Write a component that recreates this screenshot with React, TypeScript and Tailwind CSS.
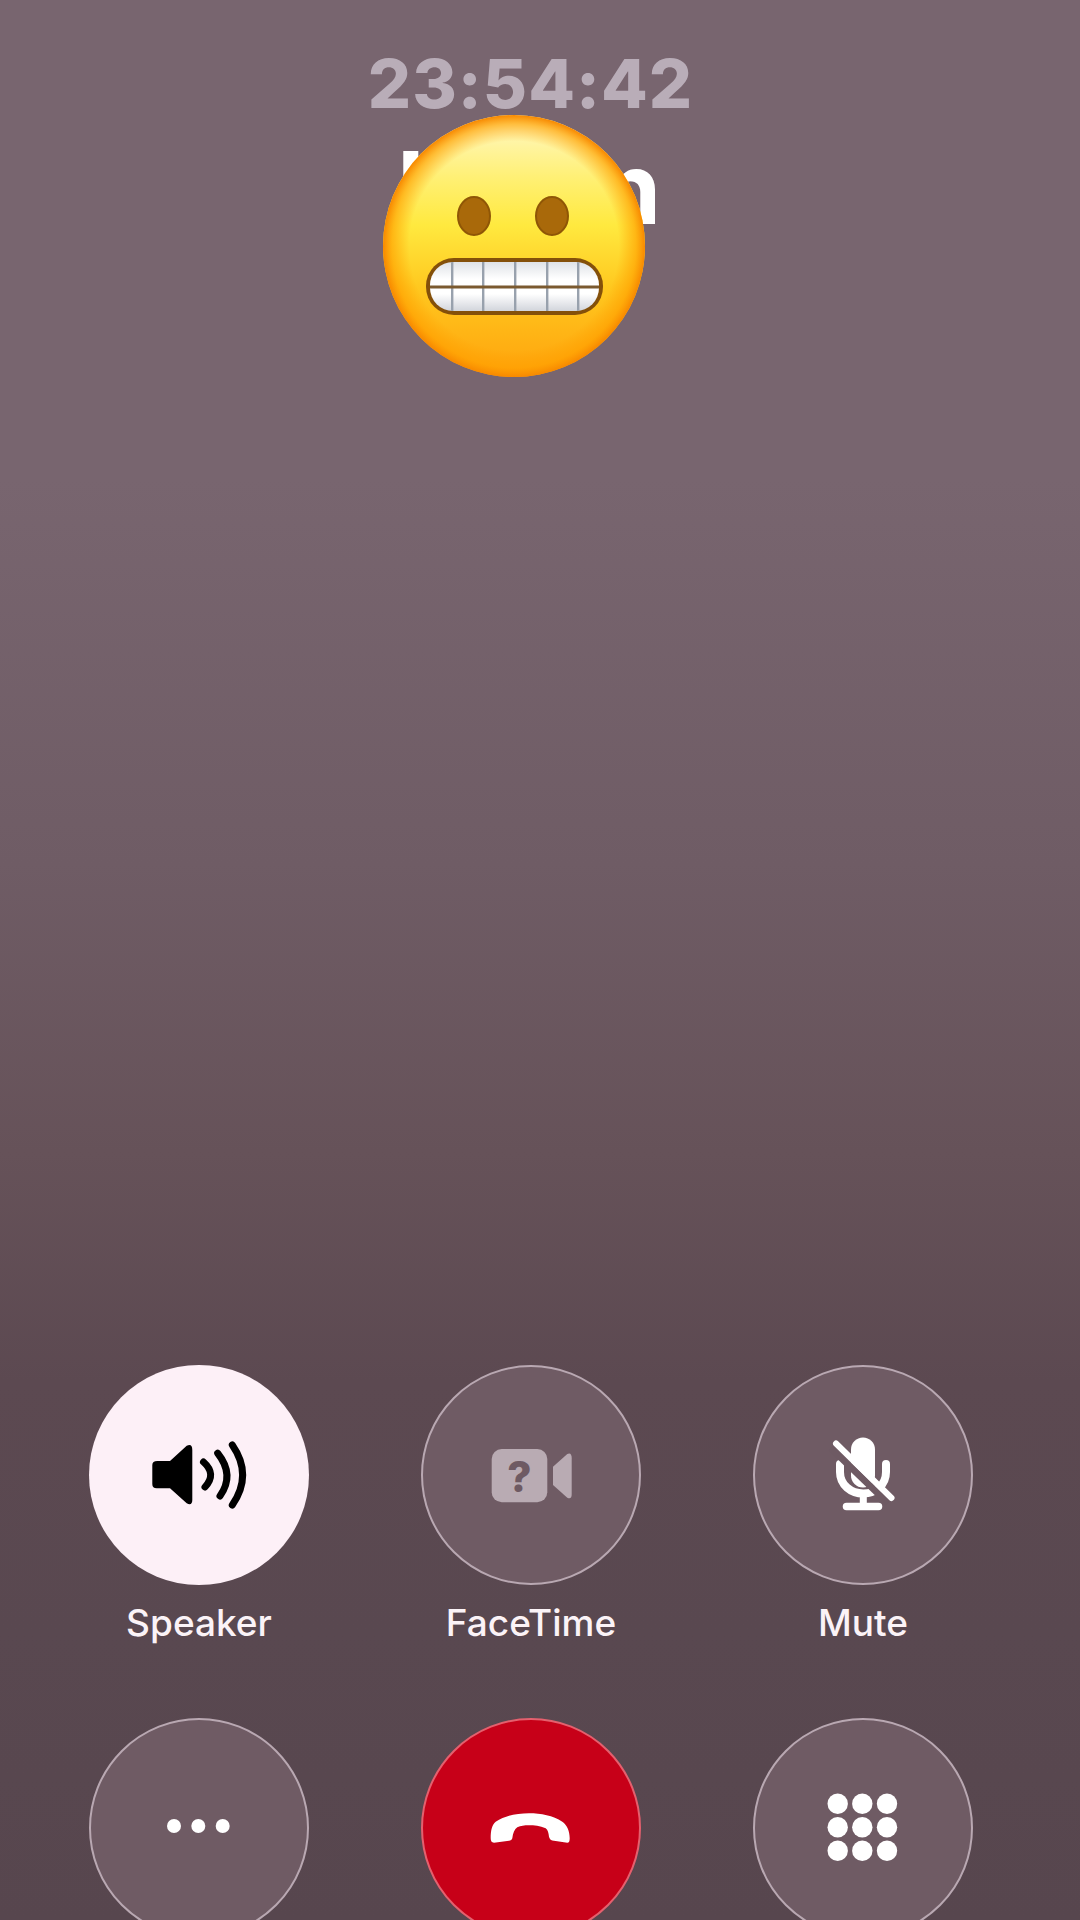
import React from "react";

const fill = "#ffffff";

function SpeakerIcon() {
  return (
    <svg width="220" height="220" viewBox="0 0 220 220" className="shrink-0">
      <path d="M68.3 96H81L97.7 80.7Q103.3 78 103.3 85V135Q103.3 141 97.7 138.3L81 123.3H67.7Q63.3 123.3 63.3 119V100Q63.3 96 68.3 96Z" fill="#000" />
      <g fill="none" stroke="#000" strokeWidth="7" strokeLinecap="round">
        <path d="M114.5 97Q128 109 116 122" />
        <path d="M128.7 88.3Q146 110 131 131" />
        <path d="M143.3 80Q164 110 143.3 140" />
      </g>
    </svg>
  );
}

function FaceTimeIcon() {
  return (
    <svg width="220" height="220" viewBox="0 0 220 220" className="shrink-0">
      <rect x="70.7" y="84" width="55.6" height="53.3" rx="10" fill="#b9abb3" />
      <path d="M132 101.7L146.3 89Q150.7 87 150.7 93.3V129Q150.7 135 146.3 132.7L132 120Z" fill="#b9abb3" />
      <text x="98.5" y="126.5" textAnchor="middle" fontFamily="Inter, sans-serif" fontWeight="800" fontSize="42" fill="#6e5a63">?</text>
    </svg>
  );
}

function MuteIcon() {
  return (
    <svg width="220" height="220" viewBox="0 0 220 220" className="shrink-0">
      <rect x="98" y="72.5" width="24" height="50" rx="12" fill={fill} />
      <path d="M87 99V107C87 120 98 128.5 110.3 128.5C122.5 128.5 133 120 133 107V99" fill="none" stroke={fill} strokeWidth="8" strokeLinecap="round" />
      <path d="M110.3 128V140" stroke={fill} strokeWidth="7" />
      <path d="M93.5 141.5H125.5" stroke={fill} strokeWidth="7.5" strokeLinecap="round" />
      <path d="M78 83L135 138" stroke="#6e5a63" strokeWidth="7" />
      <path d="M83 78.5L138.5 133" stroke={fill} strokeWidth="6" strokeLinecap="round" />
    </svg>
  );
}

function MoreIcon() {
  return (
    <svg width="220" height="220" viewBox="0 0 220 220" className="shrink-0">
      <circle cx="85" cy="108" r="7" fill={fill} />
      <circle cx="109.3" cy="108" r="7" fill={fill} />
      <circle cx="133.7" cy="108" r="7" fill={fill} />
    </svg>
  );
}

function EndIcon() {
  return (
    <svg width="220" height="220" viewBox="0 0 220 220" className="shrink-0">
      <path
        d="M69.7 120.3C69.7 112 71 107 74.7 103.7C84 97.5 96 95.3 108 95.3C120 95.3 132 97.5 141.3 103.7C146 107 148.7 113 148.7 120.3C148.7 123.5 148 124.7 146.3 124.7L131.3 122.5C129.5 122 128.5 120.5 128 118.7C127.5 115 127 112 124.7 110.3C119 107.8 113 107.3 108 107.3C103 107.3 100 107.8 96.3 109.3C93.5 111 92 115 91.3 120.3C91 122 89.5 122.5 88 122.7L73 124.7C70.5 124.7 69.7 123 69.7 120.3Z"
        fill={fill}
      />
    </svg>
  );
}

function KeypadIcon() {
  const xs = [84.7, 109.3, 134];
  const ys = [85.7, 109.3, 132.7];
  return (
    <svg width="220" height="220" viewBox="0 0 220 220" className="shrink-0">
      {ys.map((y) => xs.map((x) => <circle key={`${x}-${y}`} cx={x} cy={y} r="10.2" fill={fill} />))}
    </svg>
  );
}

function GrimaceEmoji() {
  const teeth = [69, 100, 132, 164, 195];
  return (
    <svg width="262" height="262" viewBox="0 0 262 262">
      <defs>
        <linearGradient id="face" x1="0" y1="0" x2="0" y2="1">
          <stop offset="6%" stopColor="#fff6b4" />
          <stop offset="24%" stopColor="#fff074" />
          <stop offset="42%" stopColor="#ffe93f" />
          <stop offset="66%" stopColor="#ffc81f" />
          <stop offset="100%" stopColor="#ffa20c" />
        </linearGradient>
        <radialGradient id="rim" cx="50%" cy="50%" r="50%">
          <stop offset="80%" stopColor="#ffa000" stopOpacity="0" />
          <stop offset="93%" stopColor="#ffa000" stopOpacity="0.65" />
          <stop offset="100%" stopColor="#f78800" stopOpacity="1" />
        </radialGradient>
        <linearGradient id="tooth" x1="0" y1="0" x2="0" y2="1">
          <stop offset="0%" stopColor="#dfe2e7" />
          <stop offset="35%" stopColor="#ffffff" />
          <stop offset="65%" stopColor="#ffffff" />
          <stop offset="100%" stopColor="#d2d5dc" />
        </linearGradient>
        <clipPath id="mouth">
          <rect x="47" y="147" width="169" height="49" rx="23" />
        </clipPath>
      </defs>
      <circle cx="131" cy="131" r="131" fill="url(#face)" />
      <circle cx="131" cy="131" r="131" fill="url(#rim)" />
      <ellipse cx="91" cy="101" rx="16" ry="19" fill="#a9690a" stroke="#8f5606" strokeWidth="2" />
      <ellipse cx="169" cy="101" rx="16" ry="19" fill="#a9690a" stroke="#8f5606" strokeWidth="2" />
      <rect x="43" y="143" width="177" height="57" rx="28" fill="#84500a" />
      <g clipPath="url(#mouth)">
        <rect x="47" y="147" width="169" height="49" fill="url(#tooth)" />
        {teeth.map((x) => (
          <rect key={x} x={x - 1} y="147" width="2.4" height="49" fill="#98a1ad" />
        ))}
        <rect x="47" y="170.5" width="169" height="3" fill="#7b5a30" />
      </g>
    </svg>
  );
}

function RoundButton({ label, className, children }: { label?: string; className: string; children: React.ReactNode }) {
  return (
    <div className="flex flex-col items-center">
      <div className={`box-border flex h-[220px] w-[220px] items-center justify-center rounded-full ${className}`}>{children}</div>
      {label ? <div className="mt-[16px] h-[44px] whitespace-nowrap text-[37px] font-medium leading-[44px] text-[#fbf3f7]">{label}</div> : null}
    </div>
  );
}

export default function App() {
  const plain = "border-2 border-[#b9a8b2] bg-[#6f5b64]";
  return (
    <div
      className="relative flex h-[1920px] w-[1080px] flex-col overflow-hidden bg-[linear-gradient(180deg,#78656f_0%,#78656f_25%,#6f5c65_45%,#665259_60%,#5c4951_72%,#594850_85%,#57464e_100%)]"
      style={{ fontFamily: "Inter, 'Liberation Sans', sans-serif" }}
    >
      <div className="flex w-[1061px] flex-col items-center">
        <div className="mt-[47px] text-[68px] font-extrabold leading-[72px] tracking-[1px] text-[#b9adb8]">23:54:42</div>
        <div className="mt-[9px] text-[100px] font-bold leading-[120px] tracking-[3px] text-white">Kuhn</div>
      </div>
      <div className="absolute left-[383px] top-[115px]">
        <GrimaceEmoji />
      </div>
      <div className="ml-[89px] mt-[1117px] grid grid-cols-[220px_220px_220px] gap-x-[112px] gap-y-[73px]">
        <RoundButton label="Speaker" className="bg-[#fdf0f7]"><SpeakerIcon /></RoundButton>
        <RoundButton label="FaceTime" className={plain}><FaceTimeIcon /></RoundButton>
        <RoundButton label="Mute" className={plain}><MuteIcon /></RoundButton>
        <RoundButton className={plain}><MoreIcon /></RoundButton>
        <RoundButton className="border-2 border-[#e4606e] bg-[#c70018]"><EndIcon /></RoundButton>
        <RoundButton className={plain}><KeypadIcon /></RoundButton>
      </div>
    </div>
  );
}
